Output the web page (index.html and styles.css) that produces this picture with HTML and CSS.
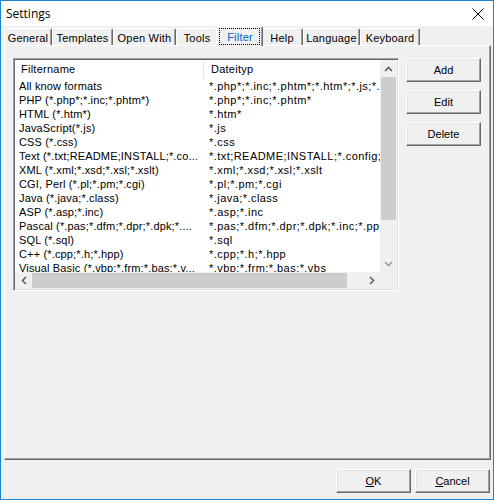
FILE: index.html
```html
<!DOCTYPE html>
<html>
<head>
<meta charset="utf-8">
<link rel="stylesheet" href="styles.css">
</head>
<body>
<div class="window">
  <div class="titlebar">
    <span class="title">Settings</span>
    <svg class="close" width="12" height="12" viewBox="0 0 12 12"><path d="M0.5 0.5 L11.5 11.5 M11.5 0.5 L0.5 11.5" stroke="#000" stroke-width="1" fill="none"/></svg>
  </div>
  <div class="content">
    <div class="tabs">
      <div class="tab w-general">General</div>
      <div class="tab w-templates">Templates</div>
      <div class="tab w-openwith">Open With</div>
      <div class="tab w-tools">Tools</div>
      <div class="tab tab-active w-filter"><span class="focus">Filter</span></div>
      <div class="tab w-help">Help</div>
      <div class="tab w-language">Language</div>
      <div class="tab w-keyboard">Keyboard</div>
    </div>
    <div class="panel">
      <div class="listview">
        <div class="list-main">
          <div class="list-header">
            <div class="hcell hcol1">Filtername</div>
            <div class="hcell hcol2">Dateityp</div>
          </div>
          <div class="row"><div class="c1">All know formats</div><div class="c2">*.php*;*.inc;*.phtm*;*.htm*;*.js;*.css;*.txt</div></div>
          <div class="row"><div class="c1">PHP (*.php*;*.inc;*.phtm*)</div><div class="c2">*.php*;*.inc;*.phtm*</div></div>
          <div class="row"><div class="c1">HTML (*.htm*)</div><div class="c2">*.htm*</div></div>
          <div class="row"><div class="c1">JavaScript(*.js)</div><div class="c2">*.js</div></div>
          <div class="row"><div class="c1">CSS (*.css)</div><div class="c2">*.css</div></div>
          <div class="row"><div class="c1">Text (*.txt;README;INSTALL;*.co...</div><div class="c2">*.txt;README;INSTALL;*.config;*.ini</div></div>
          <div class="row"><div class="c1">XML (*.xml;*.xsd;*.xsl;*.xslt)</div><div class="c2">*.xml;*.xsd;*.xsl;*.xslt</div></div>
          <div class="row"><div class="c1">CGI, Perl (*.pl;*.pm;*.cgi)</div><div class="c2">*.pl;*.pm;*.cgi</div></div>
          <div class="row"><div class="c1">Java (*.java;*.class)</div><div class="c2">*.java;*.class</div></div>
          <div class="row"><div class="c1">ASP (*.asp;*.inc)</div><div class="c2">*.asp;*.inc</div></div>
          <div class="row"><div class="c1">Pascal (*.pas;*.dfm;*.dpr;*.dpk;*....</div><div class="c2">*.pas;*.dfm;*.dpr;*.dpk;*.inc;*.pp</div></div>
          <div class="row"><div class="c1">SQL (*.sql)</div><div class="c2">*.sql</div></div>
          <div class="row"><div class="c1">C++ (*.cpp;*.h;*.hpp)</div><div class="c2">*.cpp;*.h;*.hpp</div></div>
          <div class="row"><div class="c1">Visual Basic (*.vbp;*.frm;*.bas;*.v...</div><div class="c2">*.vbp;*.frm;*.bas;*.vbs</div></div>
        </div>
        <div class="vscroll">
          <div class="arrow"><svg width="9" height="6" viewBox="0 0 9 6"><path d="M1 5 L4.5 1.5 L8 5" stroke="#606060" stroke-width="1.6" fill="none"/></svg></div>
          <div class="vthumb"></div>
          <div class="vtrack"></div>
          <div class="arrow"><svg width="9" height="6" viewBox="0 0 9 6"><path d="M1 1 L4.5 4.5 L8 1" stroke="#a0a0a0" stroke-width="1.6" fill="none"/></svg></div>
        </div>
        <div class="hscroll">
          <div class="harrow"><svg width="6" height="9" viewBox="0 0 6 9"><path d="M5 1 L1.5 4.5 L5 8" stroke="#606060" stroke-width="1.6" fill="none"/></svg></div>
          <div class="hthumb"></div>
          <div class="htrack"></div>
          <div class="harrow"><svg width="6" height="9" viewBox="0 0 6 9"><path d="M1 1 L4.5 4.5 L1 8" stroke="#606060" stroke-width="1.6" fill="none"/></svg></div>
        </div>
        <div class="corner"></div>
      </div>
      <div class="side-buttons">
        <div class="btn">Add</div>
        <div class="btn">Edit</div>
        <div class="btn">Delete</div>
      </div>
    </div>
  </div>
  <div class="footer">
    <div class="btn btn-foot"><span><u>O</u>K</span></div>
    <div class="btn btn-foot"><span><u>C</u>ancel</span></div>
  </div>
</div>
</body>
</html>
```

FILE: styles.css
```css
* { box-sizing: border-box; }
html, body { margin: 0; padding: 0; background: #ffffff; }
body {
  font-family: "Liberation Sans", Arial, sans-serif;
  font-size: 11px;
  color: #000;
}
.window {
  width: 494px;
  height: 500px;
  border: 1px solid #1883d7;
  background: #f0f0f0;
  display: flex;
  flex-direction: column;
  overflow: hidden;
}
.titlebar {
  height: 25px;
  background: #fff;
  display: flex;
  align-items: center;
  justify-content: space-between;
  padding: 0 9px 0 5px;
  flex: none;
}
.title {
  font-family: "Open Sans", "Liberation Sans", sans-serif;
  font-size: 12px;
}
.close { display: block; margin-top: 1px; }
.content {
  flex: 1;
  display: flex;
  flex-direction: column;
  padding: 0 2px 0 3px;
}
.tabs {
  height: 19px;
  display: flex;
  align-items: flex-end;
  flex: none;
  position: relative;
  z-index: 2;
}
.tab {
  height: 17px;
  border-top: 1px solid #fff;
  border-left: 1px solid #fff;
  border-right: 1px solid #696969;
  box-shadow: inset -1px 0 #a0a0a0;
  border-top-left-radius: 2px;
  border-top-right-radius: 2px;
  display: flex;
  align-items: center;
  justify-content: center;
  line-height: 13px;
  background: #f0f0f0;
  padding-top: 2px;
  letter-spacing: 0.2px;
}
.w-general { width: 48px; }
.w-templates { width: 61px; }
.w-openwith { width: 63px; }
.w-tools { width: 42px; }
.w-filter { width: 43px; }
.w-help { width: 42px; }
.w-language { width: 57px; }
.w-keyboard { width: 60px; }
.tab-active {
  width: 47px;
  height: 20px;
  margin: 0 -2px -1px -2px;
  position: relative;
  z-index: 3;
  color: #0066cc;
  padding-top: 0;
}
.focus {
  border: 1px dotted #000;
  padding: 2px 6px 1px 7px;
  height: 17px;
  display: flex;
  align-items: center;
}
.panel {
  flex: none;
  height: 415px;
  border-top: 1px solid #fff;
  border-left: 1px solid #fff;
  border-right: 1px solid #696969;
  border-bottom: 1px solid #696969;
  box-shadow: inset -1px -1px #a0a0a0;
  display: flex;
  align-items: flex-start;
  padding: 12px 0 0 8px;
  gap: 7px;
}
.listview {
  width: 386px;
  height: 233px;
  background: #fff;
  border-top: 1px solid #a0a0a0;
  border-left: 1px solid #a0a0a0;
  border-right: 1px solid #fff;
  border-bottom: 1px solid #fff;
  box-shadow: inset 1px 1px #696969, inset -1px -1px #e3e3e3;
  padding: 1px;
  display: grid;
  grid-template-columns: 1fr 17px;
  grid-template-rows: 1fr 17px;
}
.list-main {
  overflow: hidden;
  min-width: 0;
  min-height: 0;
  letter-spacing: 0.25px;
}
.list-header {
  height: 19px;
  display: flex;
  align-items: stretch;
  white-space: nowrap;
}
.hcell {
  display: flex;
  align-items: center;
  padding-bottom: 1px;
}
.hcol1 {
  width: 189px;
  flex: none;
  padding-left: 6px;
  border-right: 1px solid #e5e5e5;
}
.hcol2 { padding-left: 7px; flex: none; }
.row {
  height: 14px;
  line-height: 14px;
  display: flex;
  white-space: nowrap;
}
.c1 {
  width: 189px;
  flex: none;
  padding: 0 2px 0 4px;
  overflow: hidden;
  letter-spacing: 0.15px;
}
.c2 {
  flex: none;
  padding-left: 5px;
  letter-spacing: 0.45px;
}
.vscroll {
  background: #f0f0f0;
  display: flex;
  flex-direction: column;
  grid-row: 1;
  grid-column: 2;
}
.arrow {
  height: 17px;
  display: flex;
  align-items: center;
  justify-content: center;
  flex: none;
}
.vthumb {
  height: 143px;
  margin: 0 1px;
  background: #cdcdcd;
  flex: none;
}
.vtrack { flex: 1; }
.hscroll {
  background: #f0f0f0;
  display: flex;
  grid-row: 2;
  grid-column: 1;
}
.harrow {
  width: 17px;
  display: flex;
  align-items: center;
  justify-content: center;
  flex: none;
}
.hthumb {
  width: 315px;
  margin: 1px 0;
  background: #cdcdcd;
  flex: none;
}
.htrack { flex: 1; }
.corner {
  background: #f0f0f0;
  grid-row: 2;
  grid-column: 2;
}
.side-buttons {
  display: flex;
  flex-direction: column;
  gap: 8px;
}
.btn {
  width: 75px;
  height: 24px;
  border-top: 1px solid #fff;
  border-left: 1px solid #fff;
  border-right: 1px solid #696969;
  border-bottom: 1px solid #696969;
  box-shadow: inset -1px -1px #a0a0a0, inset 1px 1px #e3e3e3;
  background: #f0f0f0;
  display: flex;
  align-items: center;
  justify-content: center;
  padding-bottom: 1px;
}
.footer {
  flex: 1;
  display: flex;
  justify-content: flex-end;
  align-items: flex-start;
  gap: 4px;
  padding: 9px 3px 0 0;
}
.btn-foot { width: 75px; }
u { text-decoration: underline; text-underline-offset: 1px; }
```
